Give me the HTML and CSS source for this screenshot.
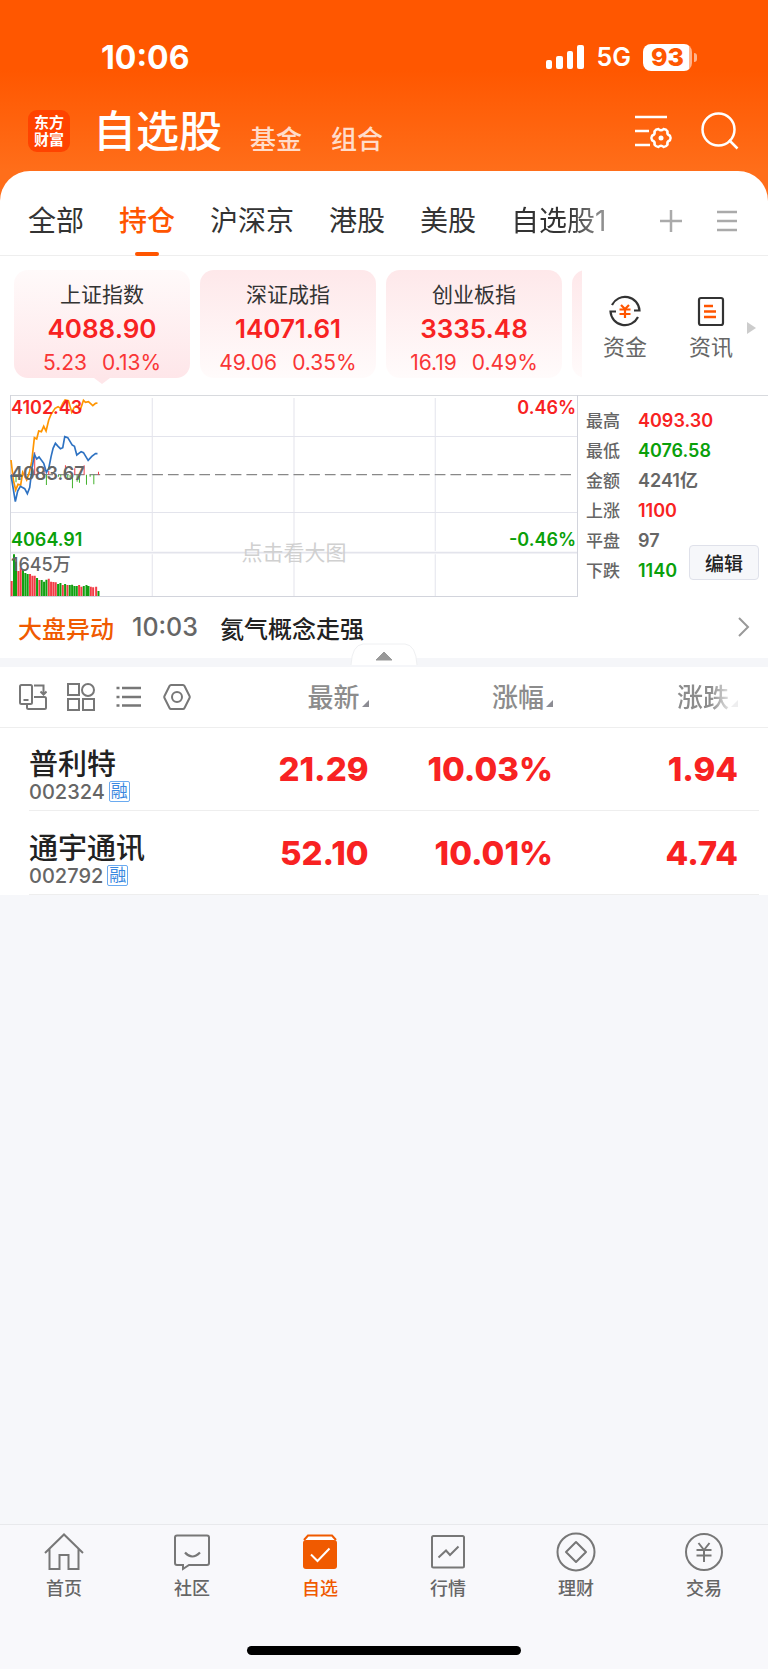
FILE: index.html
```
<!DOCTYPE html>
<html lang="zh-CN">
	<head>
		<meta charset="utf-8">
		<meta name="viewport" content="width=device-width, initial-scale=1">
		<title>自选股</title>
		<link rel="stylesheet" href="styles.css">
	</head>
	<body>
	<header>
		<div class="status">
			<span class="clock">10:06</span>
			<svg class="signal" width="38" height="24" viewBox="0 0 38 24" fill="#fff">
				<rect x="0" y="15" width="6" height="9" rx="2"/><rect x="10" y="11" width="7" height="13" rx="2"/>
				<rect x="21" y="6" width="6" height="18" rx="2"/><rect x="31" y="0" width="7" height="24" rx="2"/>
			</svg>
			<span class="network">5G</span>
			<span class="battery">93</span>
		</div>
		<div class="topbar">
			<span class="logo">东方<br>财富</span>
			<h1>自选股</h1>
			<a class="sub" href="#">基金</a>
			<a class="sub" href="#">组合</a>
			<button class="icon manage" aria-label="管理">
				<svg width="38" height="36" viewBox="0 0 38 36" fill="none" stroke="#fff" stroke-width="2.5">
					<path d="M0 4h32M0 18h14M0 32h15"/>
					<g transform="translate(26 25)"><path d="M9-2.2Q10.3 0 9 2.2Q5.6 3.3 6.5 6.7Q5.2 8.9 2.6 8.9Q0 6.6-2.6 8.9Q-5.2 8.9-6.5 6.7Q-5.6 3.3-9 2.2Q-10.3 0-9-2.2Q-5.6-3.3-6.5-6.7Q-5.2-8.9-2.6-8.9Q0-6.6 2.6-8.9Q5.2-8.9 6.5-6.7Q5.6-3.3 9-2.2z"/><circle r="2.5" fill="#fff" stroke="none"/></g>
				</svg>
			</button>
			<button class="icon" aria-label="搜索">
				<svg width="38" height="38" viewBox="0 0 38 38" fill="none" stroke="#fff" stroke-width="2.5"><circle cx="17.500" cy="17.500" r="16"/><path d="M28 28l8.500 8.500"/></svg>
			</button>
		</div>
	</header>
	<main>
		<nav class="tabs">
			<a href="#">全部</a>
			<a href="#" class="on">持仓</a>
			<a href="#">沪深京</a>
			<a href="#">港股</a>
			<a href="#">美股</a>
			<a href="#" class="last">自选股1</a>
			<button class="icon add" aria-label="添加"><svg width="22" height="22" viewBox="0 0 22 22" stroke="#aaa" stroke-width="2.5"><path d="M0 11h22M11 0v22"/></svg></button>
			<button class="icon" aria-label="菜单"><svg width="22" height="22" viewBox="0 0 22 22" stroke="#aaa" stroke-width="2.5"><path d="M1 2h20M1 11h20M1 20h20"/></svg></button>
		</nav>

		<section class="indexes">
			<div class="cards">
				<a href="#" class="card on"><span class="name">上证指数</span><b>4088.90</b><span class="diff"><i>5.23</i><i>0.13%</i></span></a>
				<a href="#" class="card"><span class="name">深证成指</span><b>14071.61</b><span class="diff"><i>49.06</i><i>0.35%</i></span></a>
				<a href="#" class="card"><span class="name">创业板指</span><b>3335.48</b><span class="diff"><i>16.19</i><i>0.49%</i></span></a>
				<a href="#" class="card" aria-label="更多指数"></a>
			</div>
			<a href="#" class="link">
				<svg width="34" height="34" viewBox="0 0 34 34" fill="none" stroke="#333" stroke-width="2.200">
					<path d="M4 11A14.500 14.500 0 0 1 31.500 16.500H26M30 23A14.500 14.500 0 0 1 2.500 17.500H8"/>
					<path d="M13 11l4 4 4-4M11.500 15.500h11M11.500 20h11M17 15v9" stroke="#ff5500"/>
				</svg>资金
			</a>
			<a href="#" class="link">
				<svg width="34" height="34" viewBox="0 0 34 34" fill="none" stroke="#333" stroke-width="2.200">
					<rect x="5" y="4" width="24" height="27" rx="2"/>
					<path d="M10 12h9M10 17.500h12M10 23h12" stroke="#ff5500" stroke-width="2.500"/>
				</svg>资讯
			</a>
			<svg class="more" width="9" height="12" viewBox="0 0 9 12" fill="#ccc"><path d="M0 0l9 6-9 6z"/></svg>
		</section>

		<section class="market">
			<a href="#" class="chart">
				<!-- three units per pixel -->
				<svg viewBox="30 30 1701 606" preserveAspectRatio="none" fill="none" stroke-width="3">
					<path stroke="#e3e4ec" d="M30 154.500H1729M30 382.500H1729M456 39V498M456 508V633M880.500 39V498M880.500 508V633M1303.500 39V498M1303.500 508V633"/>
					<path stroke="#e3e4ec" stroke-width="5" d="M30 503H1729"/>
					<path stroke="#d2d4dc" d="M31.500 30V634.500H1729.500V30"/>
					<path stroke="#888" stroke-width="4" stroke-dasharray="32 15" d="M33 269H1716"/>
					<path stroke="#f23c46" d="M104 269V202M112 269V256M132 269V258M146 269V258M196 269V241M224 269V250M252 269V241M295 269V260"/>
					<path stroke="#44b22e" d="M48 269V292M60 269V276M139 269V300M175 269V275M182 269V275M203 269V280M210 269V278M217 269V310M231 269V290M238 269V293M259 269V299M270 269V275M281 269V298"/>
					<g stroke-width="6">
						<path stroke="#f23c46" d="M35 633V588M55 633V558M62 633V549M90 633V567M97 633V572M104 633V572M118 633V585M146 633V581M153 633V590M160 633V591M167 633V592M188 633V600M202 633V600M237 633V600M244 633V605M272 633V605M279 633V607M288 633V605"/>
						<path stroke="#11a011" d="M42 633V508M48 633V530M69 633V553M76 633V564M83 633V567M111 633V579M125 633V585M132 633V590M139 633V584M174 633V597M181 633V594M195 633V597M209 633V600M216 633V599M223 633V603M230 633V603M251 633V603M259 633V600M265 633V603M295 633V618"/>
					</g>
					<path stroke="#ff9500" stroke-width="5" d="M33 225L40 285 47 315 54 298 62 300 68 262 80 285 88 262 95 230 103 158 110 162 116 138 124 140 131 124 138 138 146 105 153 88 165 70 174 65 181 70 188 55 195 45 205 47 215 82 222 68 230 62 240 76 250 46 256 52 265 50 278 62 286 55 292 54"/>
					<path stroke="#2e72c2" stroke-width="5" d="M33 270L46 350 53 318 61 304 74 311 82 326 89 308 96 250 103 208 110 222 117 216 131 235 139 262 146 250 153 215 159 190 166 175 174 184 181 191 188 188 194 155 203 158 216 180 223 184 230 210 243 200 250 203 264 226 275 214 286 206 292 206"/>
				</svg>
				<span class="lb high up">4102.43</span>
				<span class="lb mid">4083.67</span>
				<span class="lb low down">4064.91</span>
				<span class="lb vol">1645万</span>
				<span class="lb high right up">0.46%</span>
				<span class="lb low right down">-0.46%</span>
				<span class="hint">点击看大图</span>
			</a>
			<div class="info">
				<dl>
					<dt>最高</dt><dd class="up">4093.30</dd>
					<dt>最低</dt><dd class="down">4076.58</dd>
					<dt>金额</dt><dd>4241亿</dd>
					<dt>上涨</dt><dd class="up">1100</dd>
					<dt>平盘</dt><dd>97</dd>
					<dt>下跌</dt><dd class="down">1140</dd>
				</dl>
				<button class="edit">编辑</button>
			</div>
		</section>

		<a href="#" class="news">
			<strong>大盘异动</strong>
			<time>10:03</time>
			<span>氦气概念走强</span>
			<svg width="12" height="20" viewBox="0 0 12 20" fill="none" stroke="#999" stroke-width="2"><path d="M1 1l9 9-9 9"/></svg>
		</a>
		<div class="divider">
			<button class="fold" aria-label="收起">
				<svg width="68" height="23" viewBox="0 0 68 23"><path d="M1 22Q2 2 13 1H55Q66 2 67 22" fill="#fff" stroke="#eff0f2"/><path d="M26 17l8-8 8 8z" fill="#999" stroke="#999" stroke-linejoin="round"/></svg>
			</button>
		</div>

		<table>
			<thead>
				<tr>
					<th class="tools">
						<div>
						<button class="icon" aria-label="横屏"><svg viewBox="0 0 28 28"><rect x="1" y="2" width="12" height="19" rx="1.500"/><path d="M4.500 17h5M15 2.500H24.500V10M21.500 8.500l3 3 3-3M15 14H25.500Q27 14 27 15.500V24.500Q27 26 25.500 26H9.500Q8 26 8 24.500V22"/></svg></button>
						<button class="icon" aria-label="宫格"><svg viewBox="0 0 28 28"><rect x="1" y="1" width="11" height="11"/><circle cx="21" cy="7" r="6"/><rect x="1" y="16" width="11" height="11"/><rect x="16" y="16" width="11" height="11"/></svg></button>
						<button class="icon" aria-label="列表"><svg viewBox="0 0 28 28"><path d="M7 5H26M7 14H26M7 22.500H26M1.500 5h3M1.500 14h3M1.500 22.500h3" stroke-width="2.500"/></svg></button>
						<button class="icon" aria-label="设置"><svg viewBox="0 0 28 28"><path d="M8 2H20Q21 2 21.500 3L26.500 13Q27 14 26.500 15L21.500 25Q21 26 20 26H8Q7 26 6.500 25L1.500 15Q1 14 1.500 13L6.500 3Q7 2 8 2z"/><circle cx="14" cy="14" r="5"/></svg></button>
						</div>
					</th>
					<th><button class="sort">最新</button></th>
					<th><button class="sort">涨幅</button></th>
					<th><button class="sort fade">涨跌</button></th>
				</tr>
			</thead>
			<tbody>
				<tr>
					<td><span class="stock">普利特</span><span class="code">002324<em>融</em></span></td>
					<td>21.29</td><td>10.03%</td><td>1.94</td>
				</tr>
				<tr>
					<td><span class="stock">通宇通讯</span><span class="code">002792<em>融</em></span></td>
					<td>52.10</td><td>10.01%</td><td>4.74</td>
				</tr>
			</tbody>
		</table>
	</main>

	<footer>
		<nav class="bottom">
			<a href="#"><svg viewBox="0 0 40 40"><path d="M1 21L20 2.500 39 21M5.500 17V37H15.500V23H24.500V37H34.500V17"/></svg>首页</a>
			<a href="#"><svg viewBox="0 0 40 40"><path d="M5 3.500H35Q37 3.500 37 5.500V31Q37 33 35 33H17L11 37V33H5Q3 33 3 31V5.500Q3 3.500 5 3.500z"/><path d="M13 20.500Q20 28.500 28 20.500" stroke-width="2.200"/></svg>社区</a>
			<a href="#" class="on"><svg viewBox="0 0 40 40"><path d="M4 8L8 3.500H32L36 8" fill="#fff" stroke="#f05a00"/><rect x="3" y="8" width="34" height="29" rx="3" fill="#f05a00" stroke="none"/><path d="M11 22.500l6.500 6.500 12-12.500" stroke="#fff" stroke-width="2"/></svg>自选</a>
			<a href="#"><svg viewBox="0 0 40 40"><rect x="4" y="4" width="32" height="31.500" rx="1.500"/><path d="M10.500 25.500l7.500-7 4 4.500 8.500-8.500" stroke-width="2"/></svg>行情</a>
			<a href="#"><svg viewBox="0 0 40 40"><circle cx="20" cy="20" r="18.500"/><path d="M20 10L30 20 20 30 10 20z" stroke-linejoin="round" stroke-width="2"/></svg>理财</a>
			<a href="#"><svg viewBox="0 0 40 40"><circle cx="20" cy="20" r="18"/><path d="M14.500 11l5.500 7 5.500-7M12.500 18h15M12.500 23.500h15M20 18v12" stroke-width="2"/></svg>交易</a>
		</nav>
		<div class="homebar"></div>
	</footer>
	</body>
</html>
```
FILE: styles.css
```
*{box-sizing:border-box;}
body
{
	margin:0;
	min-height:100vh;
	display:flex;
	flex-direction:column;
	font-family:Inter, "Noto Sans CJK SC", sans-serif;
	color:#333;
	background:linear-gradient(#ff5700, #ff5700 70px, #ff6e1a 171px) 0 0 / 100% 220px no-repeat #f6f7fa;
}
a{color:inherit; text-decoration:none;}
button{border:0; padding:0; background:none; font:inherit; color:inherit; cursor:pointer;}
svg{display:block;}
.icon{flex:none;}
.up{color:#f82222;}
.down{color:#0aa00a;}

/* status bar and title */
.status{display:flex; align-items:center; height:114px; padding:0 76px 0 101px; color:#fff;}
.clock{font-size:32px; font-weight:700; flex:1;}
.network{font-size:25px; font-weight:600; margin:0 12px 0 13px;}
.battery
{
	position:relative;
	width:49px;
	height:27px;
	border-radius:8px;
	background:linear-gradient(90deg, #fff 46px, #ffb38c 46px);
	color:#ff5700;
	font-size:25px;
	font-weight:800;
	line-height:27px;
	text-align:center;
}
.battery:after{content:""; position:absolute; right:-5px; top:9px; width:3px; height:9px; border-radius:0 4px 4px 0; background:#ffb38c;}
.topbar{display:flex; align-items:center; height:57px; padding:0 29px 23px 28px; color:#fff;}
.logo
{
	width:42px;
	height:42px;
	padding-top:4px;
	border-radius:9px;
	background:#ff4300;
	font-size:15px;
	font-weight:700;
	line-height:17px;
	text-align:center;
}
h1{margin:0 28px 0 23px; font-size:43px; font-weight:500; line-height:48px;}
.sub{margin-right:29px; padding-top:18px; font-size:26px; line-height:32px; font-weight:500; color:#ffdcca;}
.manage{margin-left:auto; margin-right:28px;}

/* white sheet */
main{background:#fff; border-radius:30px 30px 0 0;}
.tabs{display:flex; align-items:center; height:85px; padding:0 30px 0 28px; border-bottom:1px solid #eee;}
.tabs a{position:relative; margin-right:35px; padding-top:14px; height:84px; font-size:28px; line-height:72px; white-space:nowrap;}
.tabs .on{color:#ff5500; font-weight:500;}
.tabs .on:after{content:""; position:absolute; left:50%; bottom:-1px; width:24px; height:4px; margin-left:-12px; border-radius:2px; background:#ff5500;}
.tabs .last{margin-right:0; -webkit-mask-image:linear-gradient(90deg, #000 60%, rgba(0,0,0,.5)); mask-image:linear-gradient(90deg, #000 60%, rgba(0,0,0,.5));}
.add{margin-left:auto; margin-right:34px;}
.tabs .icon{margin-top:16px;}

.indexes{display:flex; align-items:center; height:139px; padding-right:12px;}
.cards{flex:1; min-width:0; display:flex; gap:10px; height:139px; padding:14px 0 0 14px; overflow:hidden;}
.card
{
	position:relative;
	flex:none;
	width:176px;
	height:108px;
	padding-top:10px;
	border-radius:14px;
	text-align:center;
	background:linear-gradient(#fee8ea, #fffbfb);
}
.card.on{background:linear-gradient(#fffafa, #fee6e9);}
.card.on:after{content:""; position:absolute; left:80px; top:108px; border:8px solid transparent; border-top:6px solid #fee6e9; border-bottom:0;}
.card span, .card b{display:block;}
.card .name{font-size:21px; line-height:30px;}
.card b{font-size:26px; line-height:38px; font-weight:600; color:#f82222;}
.card .diff{display:flex; justify-content:center; gap:15px; font-size:21px; line-height:30px; color:#f93636;}
.card i{font-style:normal;}
.link{width:86px; padding-top:6px; display:flex; flex-direction:column; align-items:center; font-size:22px; line-height:32px; color:#666;}
.link svg{margin-bottom:3px;}
.more{margin-left:-7px; margin-top:4px;}

/* minute chart */
.market{display:grid; grid-template-columns:1fr 190px; margin-left:10px; border-top:1px solid #d8dade; font-weight:500;}
.chart{position:relative; display:block; height:201px; margin-top:-1px;}
.chart svg{width:100%; height:202px;}
.lb{position:absolute; left:1px; font-size:18px; line-height:20px; font-weight:600;}
.high{top:3px;}
.mid{top:69px; color:#666;}
.low{top:135px;}
.vol{top:160px; color:#666; font-weight:500;}
.right{left:auto; right:2px;}
.hint{position:absolute; left:0; right:0; top:143px; text-align:center; font-size:21px; line-height:30px; font-weight:400; color:#d0d0d0;}
.info{position:relative; padding:10px 0 0 8px; color:#666;}
dl{display:grid; grid-template-columns:52px 1fr; margin:0; font-size:17px; line-height:30px;}
dd{margin:0; font-size:18px; font-weight:600;}
.edit
{
	position:absolute;
	right:9px;
	top:149px;
	width:70px;
	height:35px;
	border:1px solid #dfe1ea;
	border-radius:4px;
	background:#f6f7fa;
	font-size:19px;
	font-weight:500;
	color:#222;
}

.news{display:flex; align-items:center; height:62px; padding:0 18px; font-size:24px; font-weight:500; color:#222;}
.news strong{font-weight:500; color:#f05a00;}
.news time{margin:0 22px 0 18px; font-size:25px; color:#666;}
.news svg{margin-left:auto;}
.divider{position:relative; height:9px; background:#f5f6f9;}
.fold{position:absolute; left:50%; bottom:1px; margin-left:-34px;}

/* stock list */
table{width:100%; table-layout:fixed; border-collapse:collapse;}
th, td{padding:0; text-align:right; width:24%;}
th:last-child, td:last-child{width:28%; padding-right:30px;}
thead tr{height:60px; border-bottom:1px solid #eee;}
.tools div{display:flex; gap:20px; padding-left:19px;}
.tools svg{width:28px; height:28px; fill:none; stroke:#777; stroke-width:2;}
.sort{padding-top:3px; font-size:26px; line-height:36px; font-weight:500; color:#8c8c8c; white-space:nowrap;}
.sort:after{content:""; display:inline-block; margin-left:2px; border-left:7px solid transparent; border-bottom:7px solid #8c8c93;}
.fade{-webkit-mask-image:linear-gradient(90deg, #000 55%, rgba(0,0,0,.15) 90%); mask-image:linear-gradient(90deg, #000 55%, rgba(0,0,0,.15) 90%);}
tbody tr{height:84px; background:linear-gradient(#eee, #eee) 29px 100% / calc(100% - 38px) 1px no-repeat;}
td{font-size:33px; font-weight:800; color:#f82222;}
td:first-child{padding:13px 0 0 29px; text-align:left; color:#222; font-weight:500; white-space:nowrap;}
.stock{display:block; font-size:29px; line-height:32px;}
.code{display:flex; align-items:center; font-size:20px; line-height:22px; color:#666; font-weight:500;}
em{width:21px; height:21px; margin-left:4px; border:1px solid #6aaaf0; border-radius:2px; font-size:17px; line-height:19px; font-style:normal; font-weight:400; text-align:center; color:#3a88e0;}

/* bottom tabs */
footer{margin-top:auto; border-top:1px solid #e8e9ec; background:#f8f8fb;}
.bottom{display:flex; height:121px; padding-top:7px;}
.bottom a{flex:1; display:flex; flex-direction:column; align-items:center; font-size:18px; line-height:26px; font-weight:500; color:#666;}
.bottom svg{width:40px; height:40px; margin-bottom:4px; fill:none; stroke:#777; stroke-width:2;}
.bottom .on{color:#f05a00;}
.homebar{width:274px; height:9px; margin:0 auto 14px; border-radius:5px; background:#000;}
```
